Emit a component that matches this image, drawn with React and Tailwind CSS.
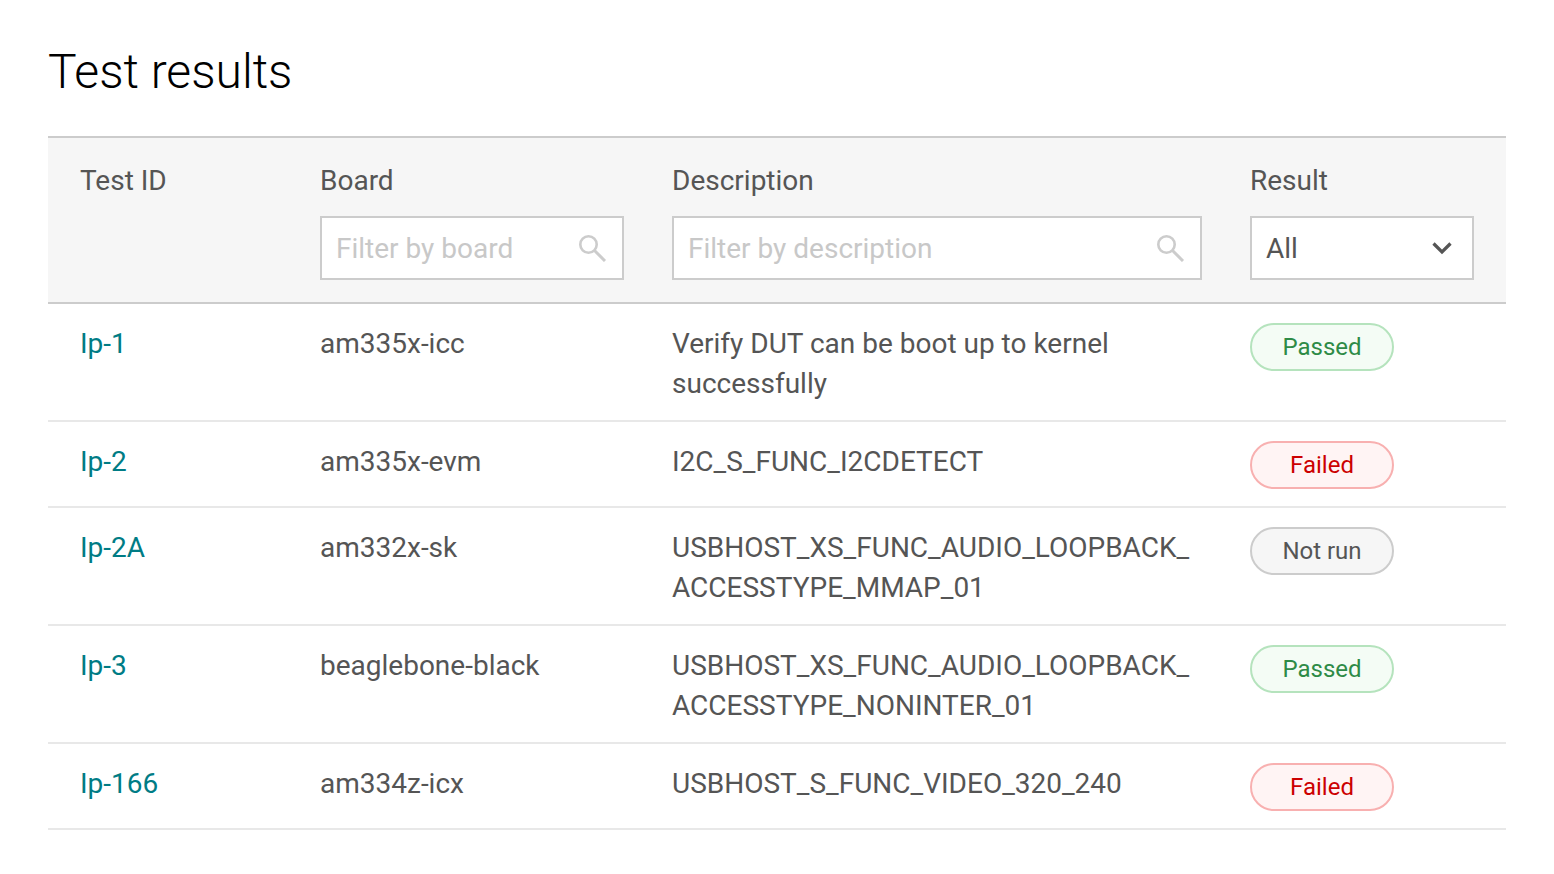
import React from "react";

const rows = [
  { id: "Ip-1", board: "am335x-icc", desc: ["Verify DUT can be boot up to kernel", "successfully"], result: "Passed" },
  { id: "Ip-2", board: "am335x-evm", desc: ["I2C_S_FUNC_I2CDETECT"], result: "Failed" },
  { id: "Ip-2A", board: "am332x-sk", desc: ["USBHOST_XS_FUNC_AUDIO_LOOPBACK_", "ACCESSTYPE_MMAP_01"], result: "Not run" },
  { id: "Ip-3", board: "beaglebone-black", desc: ["USBHOST_XS_FUNC_AUDIO_LOOPBACK_", "ACCESSTYPE_NONINTER_01"], result: "Passed" },
  { id: "Ip-166", board: "am334z-icx", desc: ["USBHOST_S_FUNC_VIDEO_320_240"], result: "Failed" },
];

const pill = {
  Passed: "border-[#b5e3bd] bg-[#f4fcf5] text-[#2e8b47]",
  Failed: "border-[#f8b0b0] bg-[#fff4f4] text-[#cc0000]",
  "Not run": "border-[#cccccc] bg-[#f6f6f6] text-[#555555]",
};

function Search() {
  return (
    <svg width="28" height="28" viewBox="0 0 28 28" fill="none" stroke="#cccccc">
      <circle cx="9.5" cy="10.5" r="8.2" strokeWidth="2.6" />
      <path d="M15.5 16.5L26 27" strokeWidth="3" />
    </svg>
  );
}

function Filter({ placeholder, className }) {
  return (
    <div className={`mt-[15px] flex h-16 items-center justify-between border-2 border-[#cccccc] bg-white pl-[14px] pr-[15px] ${className}`}>
      <span className="mt-[2px] text-[#c8c8c8]">{placeholder}</span>
      <Search />
    </div>
  );
}

export default function App() {
  return (
    <div className="min-h-[874px] bg-white px-12 pt-[41px] text-[28px] leading-10 text-[#555555] font-['Roboto',sans-serif]">
      <h1 className="text-[48px] leading-[62px] font-light text-black">Test results</h1>
      <div className="mt-[33px] flex h-[168px] border-y-2 border-[#cccccc] bg-[#f6f6f6] pt-[23px]">
        <div className="w-[272px] pl-8">Test ID</div>
        <div className="w-[352px]">
          <div>Board</div>
          <Filter placeholder="Filter by board" className="w-[304px]" />
        </div>
        <div className="w-[578px]">
          <div>Description</div>
          <Filter placeholder="Filter by description" className="w-[530px]" />
        </div>
        <div className="w-[224px]">
          <div>Result</div>
          <div className="mt-[15px] flex h-16 items-center justify-between border-2 border-[#cccccc] bg-white pl-[14px] pr-[18px]">
            <span className="mt-[2px]">All</span>
            <svg width="24" height="24" viewBox="0 0 24 24" fill="none" stroke="#555555" strokeWidth="3.2">
              <path d="M3.5 7.5L12 16l8.5-8.5" />
            </svg>
          </div>
        </div>
      </div>
      {rows.map((r) => (
        <div key={r.id} className="flex border-b-2 border-[#e8e8e8] pt-5 pb-4">
          <div className="w-[272px] pl-8 text-[#007c85]">{r.id}</div>
          <div className="w-[352px]">{r.board}</div>
          <div className="w-[578px]">
            {r.desc.map((d) => (
              <div key={d}>{d}</div>
            ))}
          </div>
          <div className="w-[224px]">
            <span className={`-mt-px mb-px flex h-12 w-36 items-center justify-center rounded-full border-2 text-2xl ${pill[r.result]}`}>
              {r.result}
            </span>
          </div>
        </div>
      ))}
    </div>
  );
}
